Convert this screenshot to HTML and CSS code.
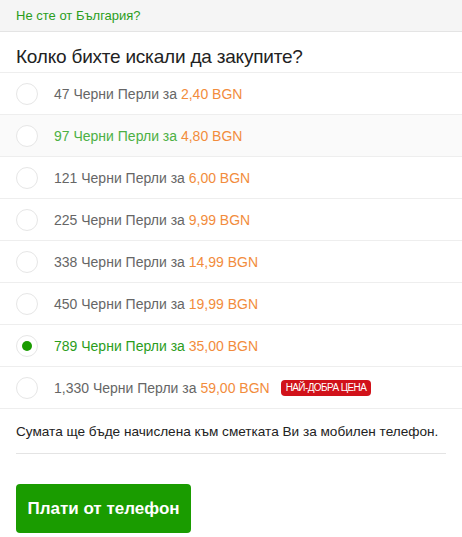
FILE: index.html
```html
<!DOCTYPE html>
<html lang="bg">
<head>
    <meta charset="UTF-8">
    <meta name="viewport" content="width=device-width, initial-scale=1.0">
    <title>Черни Перли</title>
    <link rel="stylesheet" href="styles.css">
</head>
<body>
    <div class="country-bar">
        <a href="#" class="country-link">Не сте от България?</a>
    </div>

    <h1 class="title">Колко бихте искали да закупите?</h1>

    <ul class="packages">
        <li class="package">
            <span class="radio"></span>
            <span class="label">47 Черни Перли за <span class="price">2,40 BGN</span></span>
        </li>
        <li class="package hover">
            <span class="radio"></span>
            <span class="label">97 Черни Перли за <span class="price">4,80 BGN</span></span>
        </li>
        <li class="package">
            <span class="radio"></span>
            <span class="label">121 Черни Перли за <span class="price">6,00 BGN</span></span>
        </li>
        <li class="package">
            <span class="radio"></span>
            <span class="label">225 Черни Перли за <span class="price">9,99 BGN</span></span>
        </li>
        <li class="package">
            <span class="radio"></span>
            <span class="label">338 Черни Перли за <span class="price">14,99 BGN</span></span>
        </li>
        <li class="package">
            <span class="radio"></span>
            <span class="label">450 Черни Перли за <span class="price">19,99 BGN</span></span>
        </li>
        <li class="package selected">
            <span class="radio"></span>
            <span class="label">789 Черни Перли за <span class="price">35,00 BGN</span></span>
        </li>
        <li class="package">
            <span class="radio"></span>
            <span class="label">1,330 Черни Перли за <span class="price">59,00 BGN</span></span>
            <span class="badge">НАЙ-ДОБРА ЦЕНА</span>
        </li>
    </ul>

    <div class="footer">
        <p class="note">Сумата ще бъде начислена към сметката Ви за мобилен телефон.</p>
        <button class="btn">Плати от телефон</button>
    </div>
</body>
</html>
```

FILE: styles.css
```css
body {
    font-family: 'Liberation Sans', Arial, sans-serif;
    background-color: #fff;
    margin: 0;
    padding: 0;
    color: #222;
}

.country-bar {
    height: 31px;
    background-color: #f5f5f5;
    border-bottom: 1px solid #e4e4e4;
    padding: 0 16px;
    display: flex;
    align-items: center;
}

.country-link {
    font-size: 13px;
    color: #2b9d1c;
    text-decoration: none;
}

.title {
    margin: 0;
    padding: 13px 16px 3px;
    font-size: 19px;
    letter-spacing: -0.2px;
    line-height: 24px;
    font-weight: normal;
    color: #222;
}

.packages {
    list-style: none;
    margin: 0;
    padding: 0;
    border-bottom: 1px solid #eee;
}

.package {
    height: 41px;
    border-top: 1px solid #eee;
    padding: 0 16px;
    display: flex;
    align-items: center;
    font-size: 14px;
    color: #666;
    cursor: pointer;
}

.package.hover {
    background-color: #fafafa;
    color: #4cb044;
}

.package.selected {
    color: #2b9d1c;
}

.radio {
    width: 20px;
    height: 20px;
    border: 1px solid #e6e6e6;
    border-radius: 50%;
    background: #fff;
    margin-right: 16px;
    display: flex;
    align-items: center;
    justify-content: center;
    flex-shrink: 0;
}

.selected .radio::after {
    content: "";
    width: 10px;
    height: 10px;
    border-radius: 50%;
    background-color: #1a9c00;
}

.price {
    color: #f28c3c;
}

.badge {
    margin-left: 11px;
    background-color: #d1121a;
    color: #fff;
    font-size: 10px;
    letter-spacing: -0.6px;
    line-height: 16px;
    padding: 0 5px;
    border-radius: 4px;
}

.footer {
    padding: 0 16px;
}

.note {
    margin: 0;
    padding: 14px 0 12px;
    font-size: 13.6px;
    line-height: 18px;
    color: #222;
    border-bottom: 1px solid #e4e4e4;
}

.btn {
    margin-top: 30px;
    width: 175px;
    height: 49px;
    border: none;
    border-radius: 4px;
    background-color: #1a9c00;
    color: #fff;
    font-family: 'Liberation Sans', Arial, sans-serif;
    font-size: 17px;
    font-weight: bold;
    cursor: pointer;
}
```
